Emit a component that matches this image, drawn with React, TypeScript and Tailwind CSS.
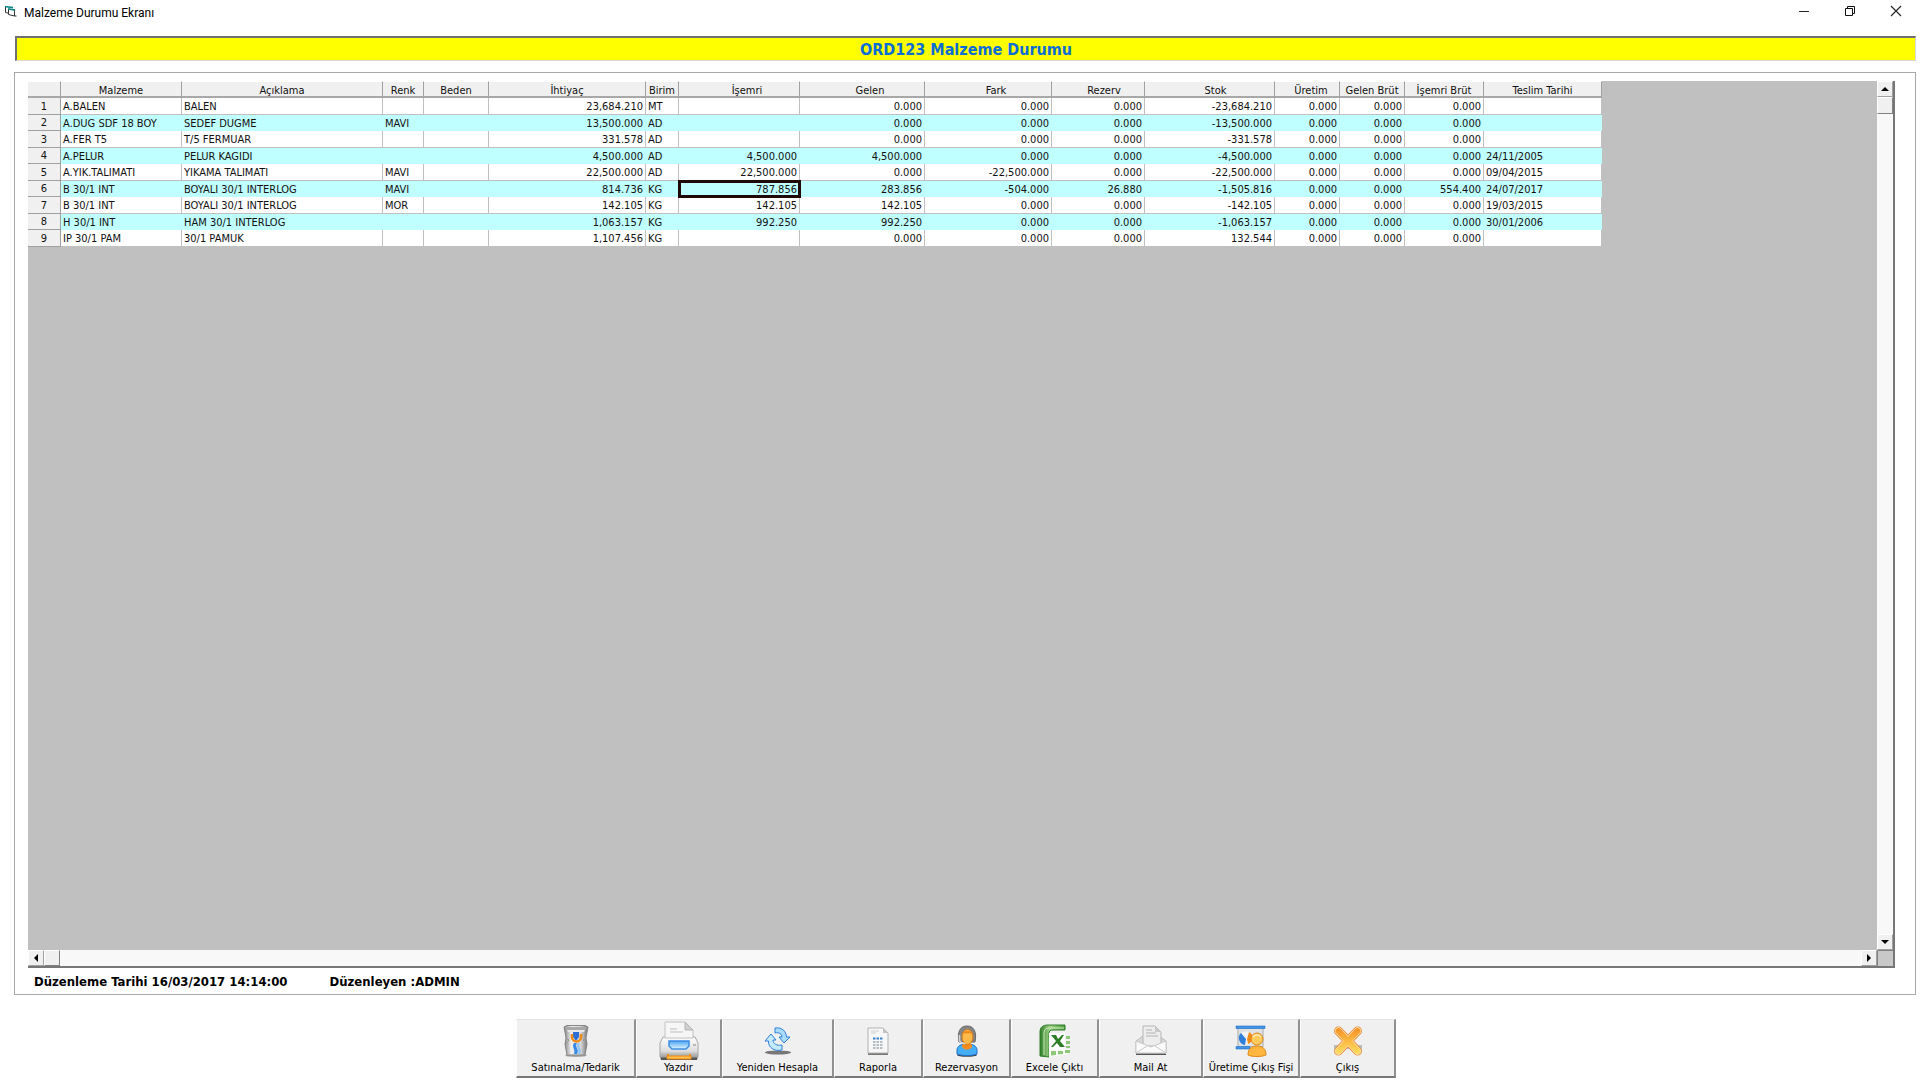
import React from 'react';

type Column = {
  title: string;
  width: string;
  align: string;
  head?: string;
};

const columns: Column[] = [
  { title: 'Malzeme', width: 'w-[121px]', align: 'text-left' },
  { title: 'Açıklama', width: 'w-[201px]', align: 'text-left' },
  { title: 'Renk', width: 'w-[41px]', align: 'text-left' },
  { title: 'Beden', width: 'w-[65px]', align: 'text-left' },
  { title: 'İhtiyaç', width: 'w-[157px]', align: 'text-right' },
  { title: 'Birim', width: 'w-[33px]', align: 'text-left' },
  { title: 'İşemri', width: 'w-[121px]', align: 'text-right', head: 'pl-4' },
  { title: 'Gelen', width: 'w-[125px]', align: 'text-right', head: 'pl-4' },
  { title: 'Fark', width: 'w-[127px]', align: 'text-right', head: 'pl-4' },
  { title: 'Rezerv', width: 'w-[93px]', align: 'text-right', head: 'pl-3' },
  { title: 'Stok', width: 'w-[130px]', align: 'text-right', head: 'pl-3' },
  { title: 'Üretim', width: 'w-[65px]', align: 'text-right', head: 'pl-2' },
  { title: 'Gelen Brüt', width: 'w-[65px]', align: 'text-right' },
  { title: 'İşemri Brüt', width: 'w-[79px]', align: 'text-right' },
  { title: 'Teslim Tarihi', width: 'w-[118px]', align: 'text-left' },
];

const rows: string[][] = [
  ['A.BALEN', 'BALEN', '', '', '23,684.210', 'MT', '', '0.000', '0.000', '0.000', '-23,684.210', '0.000', '0.000', '0.000', ''],
  ['A.DUG SDF 18 BOY', 'SEDEF DUGME', 'MAVI', '', '13,500.000', 'AD', '', '0.000', '0.000', '0.000', '-13,500.000', '0.000', '0.000', '0.000', ''],
  ['A.FER T5', 'T/5 FERMUAR', '', '', '331.578', 'AD', '', '0.000', '0.000', '0.000', '-331.578', '0.000', '0.000', '0.000', ''],
  ['A.PELUR', 'PELUR KAGIDI', '', '', '4,500.000', 'AD', '4,500.000', '4,500.000', '0.000', '0.000', '-4,500.000', '0.000', '0.000', '0.000', '24/11/2005'],
  ['A.YIK.TALIMATI', 'YIKAMA TALIMATI', 'MAVI', '', '22,500.000', 'AD', '22,500.000', '0.000', '-22,500.000', '0.000', '-22,500.000', '0.000', '0.000', '0.000', '09/04/2015'],
  ['B 30/1 INT', 'BOYALI 30/1 INTERLOG', 'MAVI', '', '814.736', 'KG', '787.856', '283.856', '-504.000', '26.880', '-1,505.816', '0.000', '0.000', '554.400', '24/07/2017'],
  ['B 30/1 INT', 'BOYALI 30/1 INTERLOG', 'MOR', '', '142.105', 'KG', '142.105', '142.105', '0.000', '0.000', '-142.105', '0.000', '0.000', '0.000', '19/03/2015'],
  ['H 30/1 INT', 'HAM 30/1 INTERLOG', '', '', '1,063.157', 'KG', '992.250', '992.250', '0.000', '0.000', '-1,063.157', '0.000', '0.000', '0.000', '30/01/2006'],
  ['IP 30/1 PAM', '30/1 PAMUK', '', '', '1,107.456', 'KG', '', '0.000', '0.000', '0.000', '132.544', '0.000', '0.000', '0.000', ''],
];

const selected = { row: 5, col: 6 };

const FormIcon = () => (
  <svg width="13" height="12" viewBox="0 0 13 12" aria-hidden="true">
    <path d="M1.500 2v5.500l3 .7" fill="#fff" stroke="#333" />
    <path d="M1 .8l8 1v1.700L1 2.300z" fill="#0c8a8a" />
    <path d="M4.500 4v5.500l6 1.500V5z" fill="#fff" stroke="#333" />
    <path d="M4 3.200l7 1v1.600L4 4.800z" fill="#0c8a8a" />
    <path d="M10.500 11h2" stroke="#333" />
  </svg>
);

const SupplyIcon = () => (
  <svg width="26" height="32" viewBox="0 0 26 32" aria-hidden="true">
    <defs>
      <linearGradient id="bag" x1="0" x2="1">
        <stop offset="0" stopColor="#7d7d7d" />
        <stop offset=".3" stopColor="#f0f0f0" />
        <stop offset=".7" stopColor="#d6d6d6" />
        <stop offset="1" stopColor="#6c6c6c" />
      </linearGradient>
    </defs>
    <ellipse cx="13" cy="30.500" rx="11" ry="1.500" fill="#a5a5a5" />
    <path d="M1 2l3-1.500h18L25 2l-1 5-1 6 1 6-2 11H4L2 19l1-6-1-6z" fill="url(#bag)" stroke="#858585" />
    <path d="M2 2h22l-1 3H3z" fill="#a8a8a8" />
    <path d="M4 5h18l-1 2H5z" fill="#e8e8e8" />
    <path d="M3 13l3 2-3 4M23 13l-3 2 3 4" fill="none" stroke="#999" />
    <path d="M10 7h6v5l-3 4-3-4z" fill="#2c6fd6" />
    <path d="M9 9v3c0 2.500 2 4.500 4.500 4.500S18 14.500 18 12V9" fill="none" stroke="#f08a1a" strokeWidth="2.600" />
    <path d="M11 18c-3 4 2 6 0 11h3c3-5-3-7 0-11z" fill="#3a8be6" />
    <path d="M15 18c-3 4 2 6 0 11h2c3-5-3-7 0-11z" fill="#8cc6f7" />
  </svg>
);

const PrinterIcon = () => (
  <svg width="40" height="40" viewBox="0 0 40 40" aria-hidden="true">
    <defs>
      <linearGradient id="prn" x1="0" y1="0" x2="0" y2="1">
        <stop offset="0" stopColor="#fdfdfd" />
        <stop offset=".7" stopColor="#dedede" />
        <stop offset="1" stopColor="#9b9b9b" />
      </linearGradient>
      <linearGradient id="prnBlue" x1="0" y1="0" x2="0" y2="1">
        <stop offset="0" stopColor="#4ba5f5" />
        <stop offset="1" stopColor="#e2f5ff" />
      </linearGradient>
    </defs>
    <path d="M1 35h38l-1 4H2z" fill="#555" />
    <path d="M4 16h32l3 6v14H1V22z" fill="url(#prn)" stroke="#a5a5a5" />
    <path d="M6 1h20l8 8v8H6z" fill="#f6f6f6" stroke="#c2c2c2" />
    <path d="M26 1l8 8h-8z" fill="#cfcfcf" stroke="#b4b4b4" />
    <path d="M11 8h7M11 11h13" stroke="#bdbdbd" />
    <path d="M10 20h20v5l-3 3H13l-3-3z" fill="url(#prnBlue)" stroke="#3b8de6" strokeWidth="1.500" />
    <path d="M9 37v-4M31 37v-4" stroke="#f08c14" strokeWidth="2" />
    <path d="M8 35h24v3H8z" fill="#ffbe4d" stroke="#f08c14" />
    <path d="M34 24h3" stroke="#888" />
  </svg>
);

const RefreshIcon = () => (
  <svg width="28" height="28" viewBox="0 0 28 28" aria-hidden="true">
    <ellipse cx="14" cy="25.500" rx="13" ry="2" fill="#777" />
    <path d="M11 1c7-1 11 3 11.500 9H26l-6 6-5-6h3c0-3-3-5-7-4z" fill="#a9dcfb" stroke="#2f7fd8" />
    <path d="M18 23C10 25 4 20 4.500 14H1l6-7 5 6H9c0 4 4 6 9 5z" fill="#c4eafe" stroke="#2f7fd8" />
  </svg>
);

const ReportIcon = () => (
  <svg width="22" height="28" viewBox="0 0 22 28" aria-hidden="true">
    <path d="M1 26h20v2H1z" fill="#777" />
    <path d="M1 1h15l5 5v20H1z" fill="#f7f7f7" stroke="#b2b2b2" />
    <path d="M16 1l5 5h-5z" fill="#c4c4c4" />
    <path d="M4 4h8M4 6h5" stroke="#cfcfcf" />
    <path d="M6 11.500h10" stroke="#3b82d0" strokeWidth="2" strokeDasharray="2.500 1" />
    <path d="M6 15h10M6 18h10M6 21h10" stroke="#76818f" strokeWidth="1.200" strokeDasharray="2.500 1" />
  </svg>
);

const AgentIcon = () => (
  <svg width="22" height="32" viewBox="0 0 22 32" aria-hidden="true">
    <ellipse cx="11" cy="30" rx="10" ry="1.800" fill="#444" />
    <path d="M1 29v-4c0-4 4-6 10-6s10 2 10 6v4c-5 2-15 2-20 0z" fill="#46aef5" stroke="#1d6fc9" />
    <path d="M6 20c-1 6 11 6 10 0l-3-2H9z" fill="#f58a1f" />
    <path d="M3 17C1 7 4 1 11 1s10 6 8 16z" fill="#858585" stroke="#666" />
    <ellipse cx="11.500" cy="12" rx="5.500" ry="7.500" fill="#fdb94a" stroke="#d87a14" />
    <path d="M6 9c2-4 9-4 11 0-3-1-8-1-11 0z" fill="#f08a1a" />
    <path d="M3.500 10v5c0 2 3 4 6 3.500" fill="none" stroke="#d5d5d5" strokeWidth="1.500" />
  </svg>
);

const ExcelIcon = () => (
  <svg width="32" height="34" viewBox="0 0 32 34" aria-hidden="true">
    <defs>
      <linearGradient id="xls" x1="0" x2="1">
        <stop offset="0" stopColor="#2d7d27" />
        <stop offset=".4" stopColor="#a5d68b" />
        <stop offset="1" stopColor="#4a9c3c" />
      </linearGradient>
    </defs>
    <path d="M1 32V8c0-5 3-7 8-7h17v5H14c-3 0-4 1-4 4v23z" fill="url(#xls)" stroke="#2f7d29" />
    <path d="M5 31V9c0-3 2-5 5-5h15" fill="none" stroke="#c9e8b8" />
    <path d="M10 9h16v16H10z" fill="#fff" />
    <path d="M10 25h21v5l-21 3z" fill="#fafafa" />
    <path d="M27 12h4v3h-4zM27 17h4v3h-4zM27 22h4v2h-4zM26 26h5v3h-5zM19 27h5v3l-5 .5zM12 27h5v4l-5 .5z" fill="#8cc878" />
    <path d="M12 11h5l2 4 4-4h2l-4 6 5 6h-5l-3-4-4 4h-2l5-6z" fill="#2d7d27" />
  </svg>
);

const MailIcon = () => (
  <svg width="32" height="31" viewBox="0 0 32 31" aria-hidden="true">
    <path d="M1 28h30v2H1z" fill="#555" />
    <path d="M1 16l7-5h16l7 5v12H1z" fill="#d8d8d8" stroke="#bdbdbd" />
    <path d="M8 1h12l6 6v14H8z" fill="#ededed" stroke="#b5b5b5" />
    <path d="M20 1l6 6h-6z" fill="#c9c9c9" />
    <path d="M11 5h6M11 8h10M11 11h12" stroke="#b3b3b3" />
    <path d="M1 16l15 6 15-6v12H1z" fill="#fafafa" stroke="#c9c9c9" />
    <path d="M1 28l11-7M31 28l-11-7" stroke="#c9c9c9" />
  </svg>
);

const PresenterIcon = () => (
  <svg width="32" height="32" viewBox="0 0 32 32" aria-hidden="true">
    <path d="M3 3h25v19H3z" fill="#dfe2e5" stroke="#a9a9a9" />
    <path d="M1 1h29v2.500H1zM1 21.500h14V24H1z" fill="#3f95ea" stroke="#2471c4" strokeWidth=".6" />
    <circle cx="11" cy="13" r="6.500" fill="#f4f4f4" />
    <path d="M11 14L6 8a7 7 0 0 0 4 12z" fill="#2f7fd8" />
    <path d="M12 14l2-7a6.500 6.500 0 0 1-1 12z" fill="#f08a1a" />
    <path d="M13 30c0-6 3-9 9-9s9 3 9 9c-4 2-14 2-18 0z" fill="#fdb740" stroke="#e0861a" />
    <circle cx="22" cy="14" r="6" fill="#ffc95e" stroke="#e0861a" />
    <path d="M18 12c2-3 6-3 8 0" stroke="#ffe9b5" strokeWidth="1.500" fill="none" />
  </svg>
);

const ExitIcon = () => (
  <svg width="30" height="32" viewBox="0 0 30 32" aria-hidden="true">
    <defs>
      <linearGradient id="exit" gradientUnits="userSpaceOnUse" x1="0" y1="1" x2="0" y2="31">
        <stop offset="0" stopColor="#f98a1f" />
        <stop offset="1" stopColor="#ffe566" />
      </linearGradient>
    </defs>
    <path d="M1 20h28v4H1z" fill="#bdbdbd" />
    <g fill="none" strokeLinecap="round">
      <path d="M5.500 6l19 20M24.500 6l-19 20" stroke="#e9802a" strokeWidth="9" />
      <path d="M5.500 6l19 20M24.500 6l-19 20" stroke="#ffe0a8" strokeWidth="7.400" />
      <path d="M5.500 6l19 20M24.500 6l-19 20" stroke="url(#exit)" strokeWidth="5.800" />
    </g>
  </svg>
);

const actions = [
  { label: 'Satınalma/Tedarik', width: 'w-[120px]', icon: <SupplyIcon /> },
  { label: 'Yazdır', width: 'w-[86px]', icon: <PrinterIcon /> },
  { label: 'Yeniden Hesapla', width: 'w-[112px]', icon: <RefreshIcon /> },
  { label: 'Raporla', width: 'w-[89px]', icon: <ReportIcon /> },
  { label: 'Rezervasyon', width: 'w-[88px]', icon: <AgentIcon /> },
  { label: 'Excele Çıktı', width: 'w-[88px]', icon: <ExcelIcon /> },
  { label: 'Mail At', width: 'w-[104px]', icon: <MailIcon /> },
  { label: 'Üretime Çıkış Fişi', width: 'w-[97px]', icon: <PresenterIcon /> },
  { label: 'Çıkış', width: 'w-[96px]', icon: <ExitIcon /> },
];

const TitleBar = () => (
  <header className="flex h-[22px] items-center pl-1 font-[Roboto,sans-serif] text-xs text-black">
    <FormIcon />
    <h1 className="ml-[7px] pt-[3px]">Malzeme Durumu Ekranı</h1>
    <div className="ml-auto flex h-full pr-px">
      <button type="button" aria-label="Simge durumuna küçült" className="flex w-[46px] items-center justify-center">
        <svg width="12" height="12" viewBox="0 0 12 12"><path d="M1 6.500h10" stroke="#222" /></svg>
      </button>
      <button type="button" aria-label="Önceki boyut" className="flex w-[46px] items-center justify-center">
        <svg width="12" height="12" viewBox="0 0 12 12">
          <path d="M1.500 3.500h7v7h-7zM3.500 3V1.500h7v7H9" fill="none" stroke="#111" />
        </svg>
      </button>
      <button type="button" aria-label="Kapat" className="flex w-[46px] items-center justify-center">
        <svg width="12" height="12" viewBox="0 0 12 12"><path d="M1 1l10 10M11 1L1 11" stroke="#222" strokeWidth="1.100" /></svg>
      </button>
    </div>
  </header>
);

const ScrollArrow: React.FC<{ label: string; path: string }> = ({ label, path }) => (
  <button
    type="button"
    aria-label={label}
    className="flex size-4 shrink-0 items-center justify-center border border-t-white border-l-white border-r-[#a0a0a0] border-b-[#a0a0a0] bg-[#f0f0f0]"
  >
    <svg width="8" height="8" viewBox="0 0 8 8"><path d={path} fill="#000" /></svg>
  </button>
);

const MaterialTable = () => (
  <table className="w-[1573px] table-fixed border-separate border-spacing-0 text-[11px] leading-[15px] text-[#111]">
    <colgroup>
      <col className="w-[33px]" />
      {columns.map(c => <col key={c.title} className={c.width} />)}
    </colgroup>
    <thead>
      <tr className="h-[17px]">
        <th className="border-t border-r border-b-2 border-t-white border-r-[#a0a0a0] border-b-[#a8a8a8] bg-[#f0f0f0] p-0"></th>
        {columns.map(c => (
          <th
            key={c.title}
            className={`${c.head ?? ''} border-t border-r border-b-2 border-t-white border-r-[#a0a0a0] border-b-[#a8a8a8] bg-[#f0f0f0] pt-1 pb-0 text-center leading-[10px] font-normal whitespace-nowrap`}
          >
            {c.title}
          </th>
        ))}
      </tr>
    </thead>
    <tbody>
      {rows.map((row, r) => (
        <tr key={r} className={r % 2 ? 'h-4 bg-[#c0ffff]' : 'h-[17px] bg-white'}>
          <th className="border-r border-b border-r-[#a0a0a0] border-b-[#a0a0a0] bg-[#f0f0f0] p-0 font-normal">{r + 1}</th>
          {row.map((cell, c) => {
            const border = r % 2 ? 'pr-[3px]' : 'border-r border-b border-[#c0c0c0] pr-[2px]';
            const focus = r === selected.row && c === selected.col ? 'outline-[3px] -outline-offset-2 outline-[#200808]' : '';
            return (
              <td key={c} className={`${columns[c].align} ${border} ${focus} py-0 pl-[2px] whitespace-nowrap`}>
                {cell}
              </td>
            );
          })}
        </tr>
      ))}
    </tbody>
  </table>
);

const App: React.FC = () => {
  return (
    <div className="flex min-h-screen flex-col bg-white font-['DejaVu_Sans_Condensed','DejaVu_Sans',sans-serif]">
      <TitleBar />

      <div className="mt-[14px] mr-1 ml-[15px] flex h-[25px] items-end justify-center border-t-2 border-r border-b border-l-2 border-t-[#707070] border-r-[#d8d8d8] border-b-[#d8d8d8] border-l-[#707070] bg-[#ffff00]">
        <h2 className="text-base leading-5 font-bold text-[#0a6cd6]">ORD123 Malzeme Durumu</h2>
      </div>

      <main className="mt-[11px] mr-1 ml-[14px] flex flex-1 flex-col border border-[#a8a8a8] pt-2 pr-5 pl-[13px]">
        <div className="flex flex-1 flex-col border-r-2 border-b-2 border-[#777]">
          <div className="flex flex-1">
            <div className="flex-1 bg-[#c0c0c0]">
              <MaterialTable />
            </div>
            {/* vertical scroll bar */}
            <div className="flex w-4 flex-col bg-[#f8f8f8]">
              <ScrollArrow label="Yukarı" path="M0 6l4-4 4 4z" />
              <div className="h-[17px] border border-t-white border-r-[#808080] border-b-[#808080] border-l-white bg-[#f0f0f0]"></div>
              <div className="flex-1"></div>
              <ScrollArrow label="Aşağı" path="M0 2l4 4 4-4z" />
            </div>
          </div>
          {/* horizontal scroll bar */}
          <div className="flex h-4 bg-[#f8f8f8]">
            <ScrollArrow label="Sola" path="M6 0L2 4l4 4z" />
            <div className="w-4 border border-t-white border-r-[#808080] border-b-[#808080] border-l-white bg-[#f0f0f0]"></div>
            <div className="flex-1"></div>
            <ScrollArrow label="Sağa" path="M2 0l4 4-4 4z" />
            <div className="w-4 border-t border-l border-[#808080] bg-[#c8c8c8]"></div>
          </div>
        </div>
        <div className="flex h-[26px] items-end gap-[42px] pb-1 pl-[6px] text-[13px] leading-4 font-bold text-black">
          <p>Düzenleme Tarihi 16/03/2017 14:14:00</p>
          <p>Düzenleyen :ADMIN</p>
        </div>
      </main>

      <footer className="mt-6 mb-[2px] flex justify-center pr-2">
        {actions.map(a => (
          <button
            key={a.label}
            type="button"
            className={`${a.width} flex h-[59px] flex-col items-center border-t border-r-2 border-b-2 border-l border-t-[#e3e3e3] border-r-[#909090] border-b-[#787878] border-l-white bg-[#f0f0f0] text-[11px] leading-[14px] whitespace-nowrap text-black`}
          >
            <span className="flex h-[41px] items-center">{a.icon}</span>
            <span>{a.label}</span>
          </button>
        ))}
      </footer>
    </div>
  );
};

export default App;
